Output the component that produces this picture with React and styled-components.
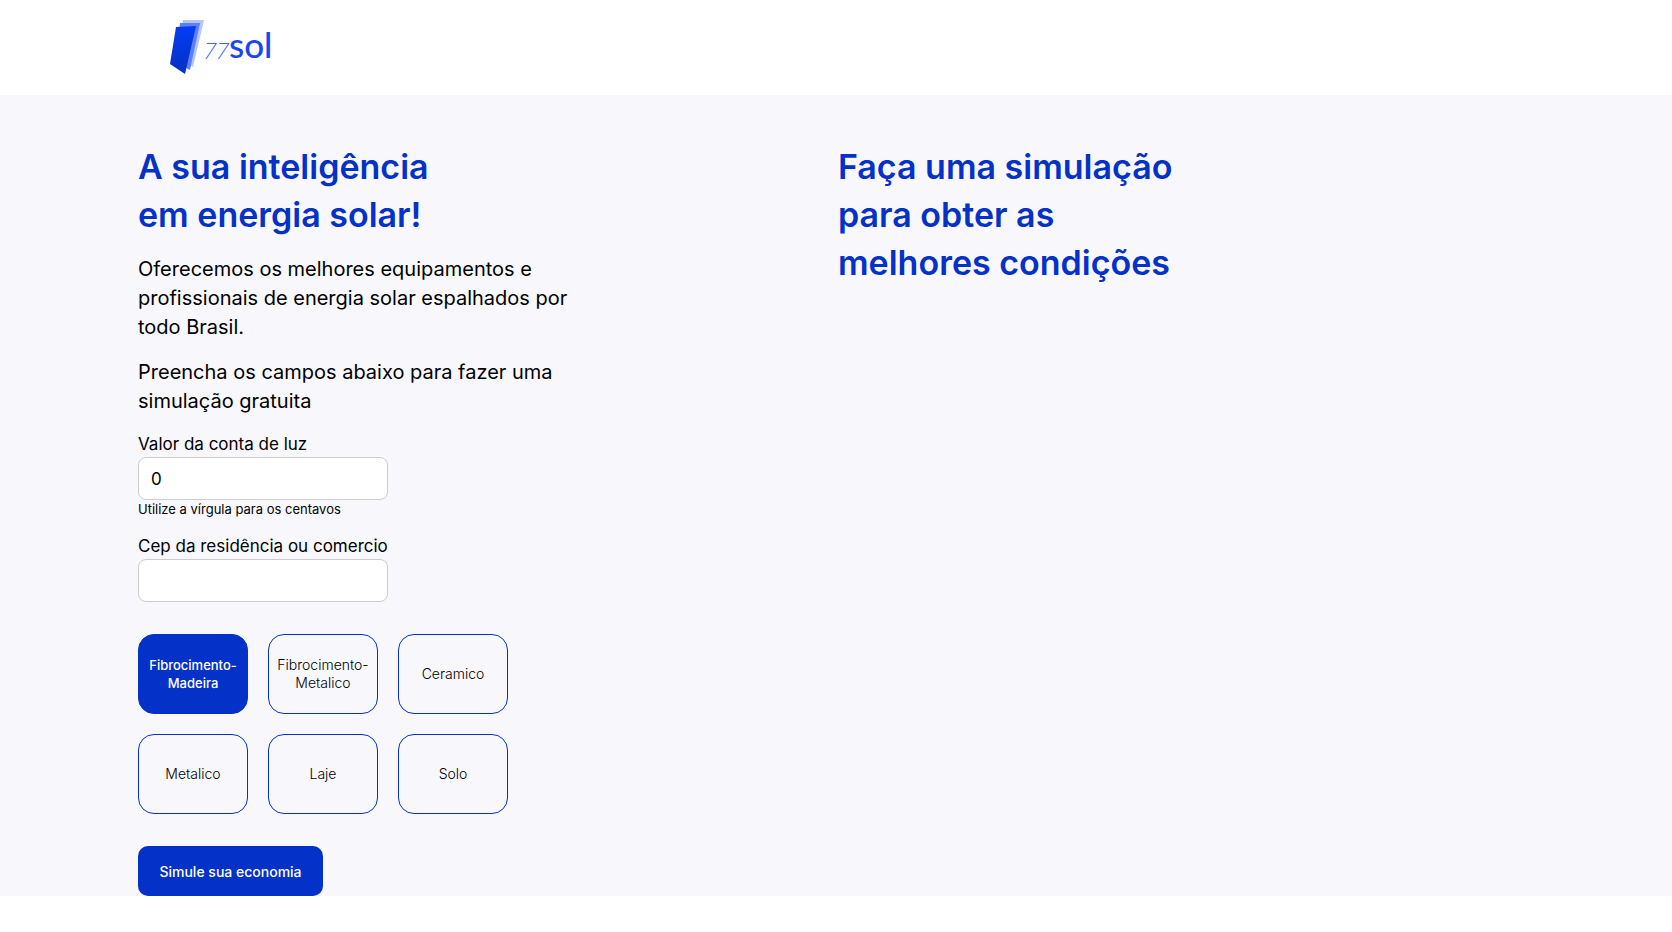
import React, { useState } from "react";
import styled, { createGlobalStyle } from "styled-components";

const blue = "#0431c8";

const GlobalStyle = createGlobalStyle`
  *, *::before, *::after { box-sizing: border-box; }
  body {
    margin: 0;
    background: #fff;
    color: #000;
    font-family: Inter, "Open Sans", sans-serif;
    font-size: 17px;
    line-height: 24px;
  }
`;

const Header = styled.header`
  background: #fff;
  padding: 16px 24px;
`;

const Container = styled.div`
  width: 100%;
  max-width: 1396px;
  margin: 0 auto;
`;

const LogoLink = styled.a`
  display: block;
  width: 104px;
  margin-left: 30px;
`;

const LogoImage = styled.svg`
  display: block;
  width: 104px;
  height: 63px;
`;

const Main = styled.main`
  background: #f8f8fc;
  padding: 48px 24px 0;
`;

const Columns = styled(Container)`
  display: grid;
  grid-template-columns: 1fr 1fr;
  gap: 4px;
  align-items: start;
`;

const Title = styled.h1`
  margin: 0;
  color: ${blue};
  font-size: 34px;
  font-weight: 600;
  line-height: 48px;
`;

const Subtitle = styled(Title).attrs({ as: "h2" })``;

const Intro = styled.div`
  display: grid;
  gap: 16px;
  max-width: 450px;
  margin: 16px 0;
`;

const Paragraph = styled.p`
  margin: 0;
  font-size: 20px;
  line-height: 29px;
`;

const Form = styled.form`
  display: flex;
  flex-direction: column;
  align-items: flex-start;
`;

const Field = styled.div`
  display: flex;
  flex-direction: column;
  margin-bottom: 16px;
`;

const Label = styled.label`
  line-height: 25px;
`;

const Input = styled.input`
  width: 250px;
  height: 43px;
  padding: 0 12px;
  border: 1px solid #ccc;
  border-radius: 8px;
  background: #fff;
  color: #000;
  font: inherit;
`;

const Hint = styled.small`
  font-size: 13px;
  line-height: 18px;
`;

const Options = styled.div`
  display: grid;
  grid-template-columns: repeat(3, 110px);
  gap: 20px;
  margin: 16px 0 32px;
`;

const Option = styled.button`
  height: 80px;
  padding: 0 4px;
  border: 1px solid ${blue};
  border-radius: 16px;
  background: ${(p) => (p.$selected ? blue : "transparent")};
  color: ${(p) => (p.$selected ? "#fff" : "#000")};
  font-family: inherit;
  font-size: ${(p) => (p.$selected ? "13px" : "14px")};
  font-weight: ${(p) => (p.$selected ? 500 : 300)};
  line-height: 18px;
  cursor: pointer;
`;

const Submit = styled.button`
  min-width: 185px;
  height: 50px;
  padding: 0 20px;
  border: 0;
  border-radius: 10px;
  background: ${blue};
  color: #fff;
  font-family: inherit;
  font-size: 14px;
  font-weight: 500;
  cursor: pointer;
`;

function Logo() {
  return (
    <LogoImage viewBox="0 0 104 63" role="img" aria-label="77sol">
      <defs>
        <linearGradient id="panel" x1="0" y1="0" x2="0" y2="1">
          <stop offset="0" stopColor="#033df5" />
          <stop offset="1" stopColor="#0530c2" />
        </linearGradient>
      </defs>
      <path d="M15 4H36L25 51L20 48L10 40Z" fill="#b5c4fa" />
      <path d="M12 7H32L22 54L16 51L8 42Z" fill="#5e80f6" />
      <path d="M8 11L28 10L17 58L2 48Z" fill="url(#panel)" />
      <text x="36" y="43" fill="#3c66f5" fontFamily="Inter, sans-serif" fontSize="22" fontWeight="200" fontStyle="italic">
        77
      </text>
      <text x="61" y="42" fill="#1747f2" fontFamily="Lato, sans-serif" fontSize="35" fontWeight="500">
        sol
      </text>
    </LogoImage>
  );
}

const roofs = [
  "Fibrocimento-Madeira",
  "Fibrocimento-Metalico",
  "Ceramico",
  "Metalico",
  "Laje",
  "Solo",
];

export default function App() {
  const [roof, setRoof] = useState(roofs[0]);
  const [bill, setBill] = useState("0");
  const [cep, setCep] = useState("");

  return (
    <>
      <GlobalStyle />
      <Header>
        <Container>
          <LogoLink href="#">
            <Logo />
          </LogoLink>
        </Container>
      </Header>
      <Main>
        <Columns>
          <section>
            <Title>
              A sua inteligência
              <br />
              em energia solar!
            </Title>
            <Intro>
              <Paragraph>
                Oferecemos os melhores equipamentos e profissionais de energia solar espalhados por todo Brasil.
              </Paragraph>
              <Paragraph>Preencha os campos abaixo para fazer uma simulação gratuita</Paragraph>
            </Intro>
            <Form onSubmit={(e) => e.preventDefault()}>
              <Field>
                <Label htmlFor="bill">Valor da conta de luz</Label>
                <Input
                  id="bill"
                  inputMode="decimal"
                  aria-describedby="bill-hint"
                  value={bill}
                  onChange={(e) => setBill(e.target.value)}
                />
                <Hint id="bill-hint">Utilize a vírgula para os centavos</Hint>
              </Field>
              <Field>
                <Label htmlFor="cep">Cep da residência ou comercio</Label>
                <Input id="cep" inputMode="numeric" value={cep} onChange={(e) => setCep(e.target.value)} />
              </Field>
              <Options role="group" aria-label="Tipo de telhado">
                {roofs.map((name) => (
                  <Option
                    key={name}
                    type="button"
                    $selected={name === roof}
                    aria-pressed={name === roof}
                    onClick={() => setRoof(name)}
                  >
                    {name}
                  </Option>
                ))}
              </Options>
              <Submit type="submit">Simule sua economia</Submit>
            </Form>
          </section>
          <section>
            <Subtitle>
              Faça uma simulação
              <br />
              para obter as
              <br />
              melhores condições
            </Subtitle>
          </section>
        </Columns>
      </Main>
    </>
  );
}
